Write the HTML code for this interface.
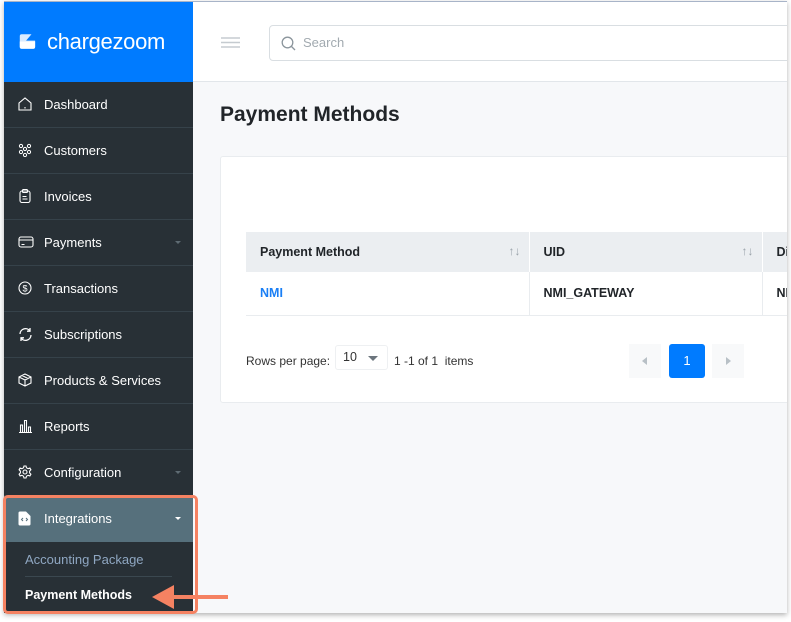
<!DOCTYPE html>
<html><head><meta charset="utf-8"><style>
*{box-sizing:border-box;margin:0;padding:0}
body{width:791px;height:622px;background:#fff;font-family:"Liberation Sans",sans-serif;position:relative;overflow:hidden}
.page{position:absolute;left:4px;top:1px;width:783px;height:612px;background:#f7f8fa;box-shadow:0 2px 5px rgba(0,0,0,.3);overflow:hidden;border-top:1px solid #a8b4c8}
.side{position:absolute;left:0;top:0;width:189px;height:612px;background:#283036}
.logo{height:80px;background:#007bff;position:relative}
.logo .t{position:absolute;left:43px;top:27px;color:#fff;font-size:22px;letter-spacing:-0.3px}
.item{height:46px;border-bottom:1px solid #36424a;position:relative;color:#fff;font-size:13px;line-height:45px;padding-left:40px}
.item svg{position:absolute;left:14px;top:15px}
.caret{position:absolute;right:12px;top:21px;width:0;height:0;border-left:3px solid transparent;border-right:3px solid transparent;border-top:3px solid #5e6b73}
.top{position:absolute;left:189px;top:0;right:0;height:80px;background:#fff;border-bottom:1px solid #e2e6ea}
.search{position:absolute;left:76px;top:23px;width:600px;height:36px;border:1px solid #d9dee2;border-radius:4px;color:#a2aab0;font-size:13px;line-height:34px;padding-left:33px}
.card{position:absolute;left:216px;top:154px;width:600px;height:247px;background:#fff;border:1px solid #e9ecef;border-radius:3px}
table{position:absolute;left:25px;top:75px;border-collapse:collapse;font-size:12.5px;width:600px}
th{background:#ebeef1;height:40px;text-align:left;padding-left:14px;font-weight:bold;color:#212529;border-right:1px solid #fff;position:relative}
td{height:43px;padding-left:14px;font-weight:bold;color:#212529;border-right:1px solid #e9ecef;border-bottom:1px solid #e9ecef}
.sort{position:absolute;right:8px;top:12px;color:#9aa3aa;font-size:12px;font-weight:normal}
</style></head><body>
<div class="page">
<div class="side">
 <div class="logo">
  <svg style="position:absolute;left:14px;top:31px" width="18" height="17" viewBox="0 0 20 18"><path d="M2 3 Q2 1 4 1 H15 L9 8 H19 V15 Q19 17 17 17 H4 Q2 17 2 15Z" fill="#fff" opacity=".85"/><path d="M2 9 H19 V15 Q19 17 17 17 H4 Q2 17 2 15Z" fill="#fff"/></svg>
  <div class="t">chargezoom</div>
 </div>
 <div class="item"><svg width="14" height="14" viewBox="0 0 14 14" fill="none" stroke="#fff" stroke-width="1.1"><path d="M1 6 L7 1 L13 6 V13 H1Z"/><path d="M7 10v1.5"/></svg>Dashboard</div>
 <div class="item"><svg width="14" height="14" viewBox="0 0 14 14" fill="none" stroke="#fff" stroke-width="1"><circle cx="3" cy="3" r="1.6"/><circle cx="11" cy="3" r="1.6"/><circle cx="7" cy="6" r="1.6"/><circle cx="3" cy="9" r="1.6"/><circle cx="11" cy="9" r="1.6"/><circle cx="7" cy="12" r="1.6"/></svg>Customers</div>
 <div class="item"><svg width="14" height="14" viewBox="0 0 14 14" fill="none" stroke="#fff" stroke-width="1.1"><rect x="2" y="2" width="10" height="11.5" rx="2"/><rect x="4.5" y="0.5" width="5" height="3" rx="1"/><path d="M4.5 7.5h4M4.5 10h5"/></svg>Invoices</div>
 <div class="item"><svg width="16" height="14" viewBox="0 0 16 14" fill="none" stroke="#fff" stroke-width="1.1"><rect x="1" y="2" width="14" height="10" rx="2"/><path d="M1 5h14M3.5 9.5h3"/></svg>Payments<span class="caret"></span></div>
 <div class="item"><svg width="14" height="14" viewBox="0 0 14 14" fill="none" stroke="#fff" stroke-width="1.1"><circle cx="7" cy="7" r="6"/><text x="7" y="10.3" font-size="9" fill="#fff" stroke="none" text-anchor="middle" font-family="Liberation Sans">$</text></svg>Transactions</div>
 <div class="item"><svg width="15" height="15" viewBox="0 0 15 15" fill="none" stroke="#fff" stroke-width="1.3"><path d="M2 7 A5.5 5.5 0 0 1 12 4 M13 8 A5.5 5.5 0 0 1 3 11"/><path d="M12 1v3.2H9M3 14v-3.2h3"/></svg>Subscriptions</div>
 <div class="item"><svg width="14" height="14" viewBox="0 0 14 14" fill="none" stroke="#fff" stroke-width="1.1"><path d="M7 1 L13 4 V10 L7 13 L1 10 V4Z M1 4 L7 7 L13 4 M7 7V13 M4 2.5 L10 5.5"/></svg>Products &amp; Services</div>
 <div class="item"><svg width="15" height="14" viewBox="0 0 15 14" fill="none" stroke="#fff" stroke-width="1.1"><path d="M1 13.5h13M2.5 13V6h2v7M6.5 13V1.5h2V13M10.5 13V8h2v5"/></svg>Reports</div>
 <div class="item"><svg width="14" height="14" viewBox="0 0 14 14" fill="none" stroke="#fff" stroke-width="1.1"><circle cx="7" cy="7" r="2"/><path d="M6 1h2l.5 1.8 1.6.9 1.8-.6 1 1.7-1.3 1.3v1.8l1.3 1.3-1 1.7-1.8-.6-1.6.9L8 13H6l-.5-1.8-1.6-.9-1.8.6-1-1.7L2.4 7.9V6.1L1.1 4.8l1-1.7 1.8.6 1.6-.9Z"/></svg>Configuration<span class="caret"></span></div>
 <div class="item" style="background:#56707c;border-bottom:none"><svg width="13" height="15" viewBox="0 0 13 15"><path d="M2 0.5h6l4.5 4.5v8a1.5 1.5 0 0 1-1.5 1.5H2A1.5 1.5 0 0 1 .5 13V2A1.5 1.5 0 0 1 2 .5Z" fill="#fff"/><path d="M5 7l-1.5 1.5L5 10M8 7l1.5 1.5L8 10" stroke="#56707c" stroke-width="1" fill="none"/></svg>Integrations<span class="caret" style="border-top-color:#fff"></span></div>
 <div style="height:72px;background:#283036;position:relative">
  <div style="position:absolute;left:21px;top:10px;color:#8fa7c2;font-size:13px">Accounting Package</div>
  <div style="position:absolute;left:21px;top:34px;width:147px;border-top:1px solid #3b4850"></div>
  <div style="position:absolute;left:21px;top:46px;color:#fff;font-size:12.5px;font-weight:bold">Payment Methods</div>
 </div>
</div>
<div class="top">
 <svg style="position:absolute;left:28px;top:35px" width="19" height="11" viewBox="0 0 19 11" stroke="#c5cbd0" stroke-width="1.5"><path d="M0 1h19M0 5.5h19M0 10h19"/></svg>
 <div class="search"><svg style="position:absolute;left:11px;top:10px" width="15" height="15" viewBox="0 0 15 15" fill="none" stroke="#8c969d" stroke-width="1.3"><circle cx="6.5" cy="6.5" r="5.3"/><path d="M10.5 10.5l3.5 3.5"/></svg>Search</div>
</div>
<div style="position:absolute;left:216px;top:101px;font-size:21px;font-weight:bold;color:#212529">Payment Methods</div>
<div class="card">
 <table>
  <tr><th style="width:283px">Payment Method<span class="sort">↑↓</span></th><th style="width:233px">UID<span class="sort">↑↓</span></th><th>Di</th></tr>
  <tr><td style="color:#1a7ff5">NMI</td><td>NMI_GATEWAY</td><td>NM</td></tr>
 </table>
 <div style="position:absolute;left:25px;top:197px;font-size:12px;color:#333">Rows per page:</div>
 <div style="position:absolute;left:114px;top:188px;width:53px;height:25px;border:1px solid #eef0f2;border-radius:3px;font-size:12.5px;color:#333;line-height:23px;padding-left:7px">10<span style="position:absolute;right:9px;top:10px;border-left:5px solid transparent;border-right:5px solid transparent;border-top:5px solid #6c757d"></span></div>
 <div style="position:absolute;left:173px;top:197px;font-size:12px;color:#333">1 -1 of 1 &nbsp;items</div>
 <div style="position:absolute;left:408px;top:187px;width:32px;height:34px;background:#f8f9fa"><span style="position:absolute;left:13px;top:13px;border-top:4px solid transparent;border-bottom:4px solid transparent;border-right:5px solid #b8c0c6"></span></div>
 <div style="position:absolute;left:448px;top:187px;width:36px;height:34px;background:#007bff;border-radius:3px;color:#fff;font-size:13px;text-align:center;line-height:34px">1</div>
 <div style="position:absolute;left:491px;top:187px;width:32px;height:34px;background:#f8f9fa"><span style="position:absolute;left:14px;top:13px;border-top:4px solid transparent;border-bottom:4px solid transparent;border-left:5px solid #b8c0c6"></span></div>
</div>
</div>
<div style="position:absolute;left:3px;top:495px;width:195px;height:119px;border:3px solid #f58262;border-radius:5px"></div>
<div style="position:absolute;left:168px;top:595px;width:60px;height:4px;background:#f58262"></div>
<svg style="position:absolute;left:152px;top:585px" width="22" height="24" viewBox="0 0 22 24"><path d="M0 12 L22 0 V24Z" fill="#f58262"/></svg>
</body></html>
